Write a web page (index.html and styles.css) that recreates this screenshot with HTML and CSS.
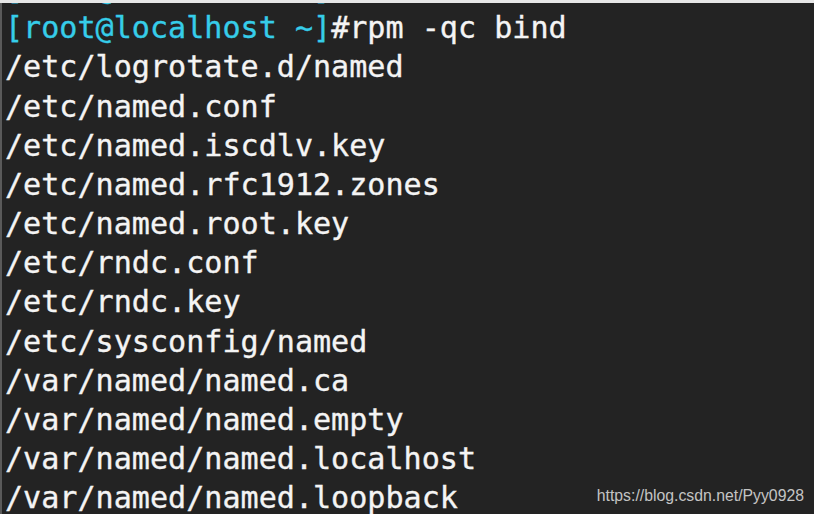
FILE: index.html
```html
<!DOCTYPE html>
<html>
<head>
<meta charset="utf-8">
<link rel="stylesheet" href="styles.css">
</head>
<body>
<div class="shot">
  <div class="topbar"></div>
  <div class="term">
    <pre class="lines"><span class="line"><span class="p">[root@localhost ~]</span></span>
<span class="line"><span class="p">[root@localhost ~]</span>#rpm -qc bind</span>
<span class="line">/etc/logrotate.d/named</span>
<span class="line">/etc/named.conf</span>
<span class="line">/etc/named.iscdlv.key</span>
<span class="line">/etc/named.rfc1912.zones</span>
<span class="line">/etc/named.root.key</span>
<span class="line">/etc/rndc.conf</span>
<span class="line">/etc/rndc.key</span>
<span class="line">/etc/sysconfig/named</span>
<span class="line">/var/named/named.ca</span>
<span class="line">/var/named/named.empty</span>
<span class="line">/var/named/named.localhost</span>
<span class="line">/var/named/named.loopback</span></pre>
    <div class="mark">https://blog.csdn.net/Pyy0928</div>
  </div>
</div>
</body>
</html>
```

FILE: styles.css
```css
html, body {
  margin: 0;
  padding: 0;
  background: #232323;
}
.shot {
  width: 814px;
  height: 514px;
  overflow: hidden;
  display: flex;
  flex-direction: column;
}
.topbar {
  height: 3px;
  background: #e6e6e6;
  flex: none;
}
.term {
  position: relative;
  flex: 1;
  overflow: hidden;
  background: #232323;
  border-left: 2px solid #5a5a5a;
}
.lines {
  margin: -34px 0 0 0;
  padding: 0 0 0 3px;
  font-family: "DejaVu Sans Mono", monospace;
  font-size: 30.1px;
  line-height: 39.17px;
  color: #f4f4f4;
  white-space: pre;
  -webkit-text-stroke: 0.35px currentColor;
}
.p {
  color: #36cde9;
}
.mark {
  position: absolute;
  right: 10px;
  bottom: 9px;
  font-family: "Liberation Sans", Arial, sans-serif;
  font-size: 15.8px;
  color: #c4c4c4;
}
```
